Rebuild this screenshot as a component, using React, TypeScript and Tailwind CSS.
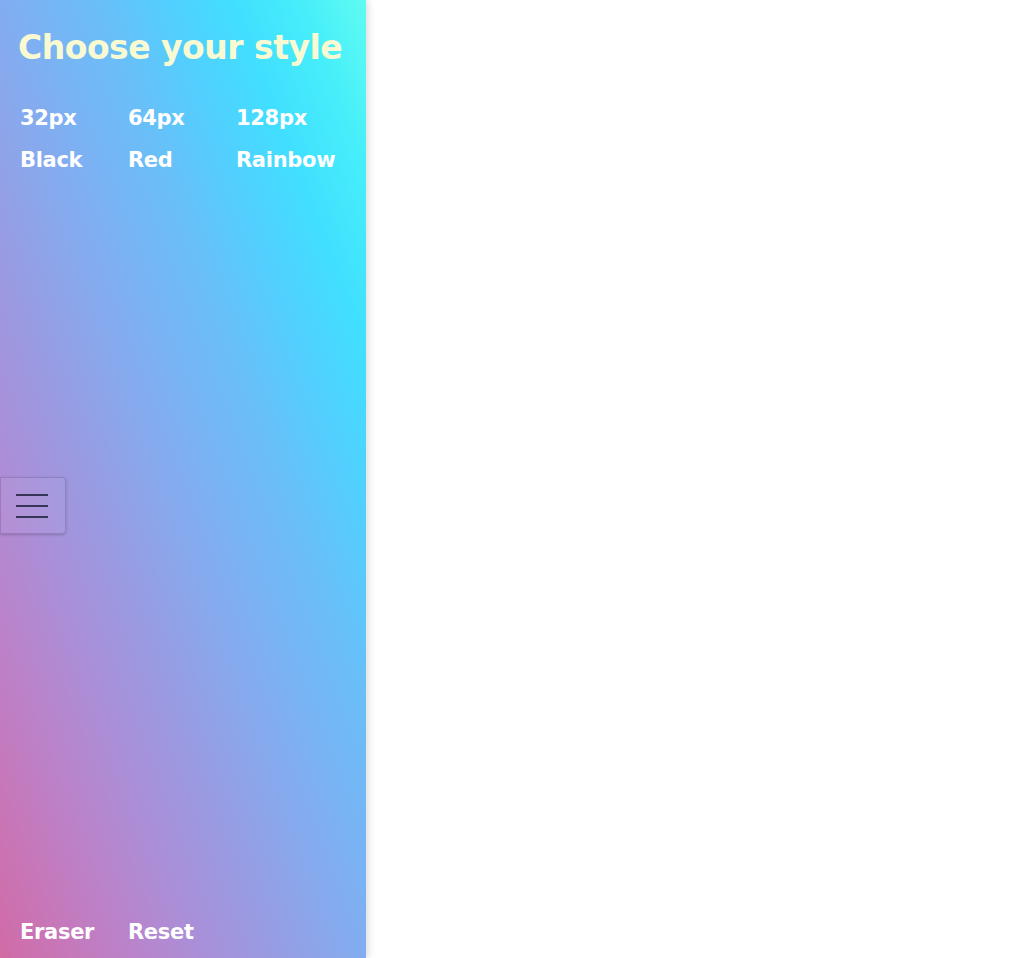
const sizes = ['32px', '64px', '128px'];
const colors = ['Black', 'Red', 'Rainbow'];

function Option({ label }: { label: string }) {
  return (
    <button className="w-[108px] text-left text-[21px] font-bold leading-[42px] tracking-[-0.3px] text-white">
      {label}
    </button>
  );
}

export default function App() {
  return (
    <div className="relative flex h-[958px] w-full bg-white font-['DejaVu_Sans',sans-serif]">
      <aside className="flex h-full w-[366px] flex-col justify-between bg-[linear-gradient(to_right_top,#d16ba5,#c777b9,#ba83ca,#aa8fd8,#9a9ae1,#8aa7ec,#79b3f4,#69bff8,#52cffe,#41dfff,#46eefa,#5ffbf1)] shadow-[3px_0_6px_rgba(0,0,0,0.12)]">
        <div className="px-5 pt-[24px]">
          <h1 className="-ml-[2px] text-[33px] font-bold leading-[48px] tracking-[-0.5px] text-[#fafad2]">
            Choose your style
          </h1>
          <div className="mt-[25px] flex">
            {sizes.map((s) => (
              <Option key={s} label={s} />
            ))}
          </div>
          <div className="flex">
            {colors.map((c) => (
              <Option key={c} label={c} />
            ))}
          </div>
        </div>
        <div className="flex px-5 pb-[5px]">
          <Option label="Eraser" />
          <Option label="Reset" />
        </div>
      </aside>

      {/* menu toggle */}
      <button className="absolute left-0 top-[477px] flex h-[57px] w-[66px] flex-col items-start justify-center gap-[9px] rounded-r-[4px] border border-[rgba(80,60,120,0.25)] bg-[rgba(255,255,255,0.05)] pl-[15px] shadow-[0_1px_3px_rgba(0,0,0,0.2)]">
        <span className="h-[2px] w-[32px] bg-[#37345a]" />
        <span className="h-[2px] w-[32px] bg-[#37345a]" />
        <span className="h-[2px] w-[32px] bg-[#37345a]" />
      </button>

      <main className="flex-1" />
    </div>
  );
}
